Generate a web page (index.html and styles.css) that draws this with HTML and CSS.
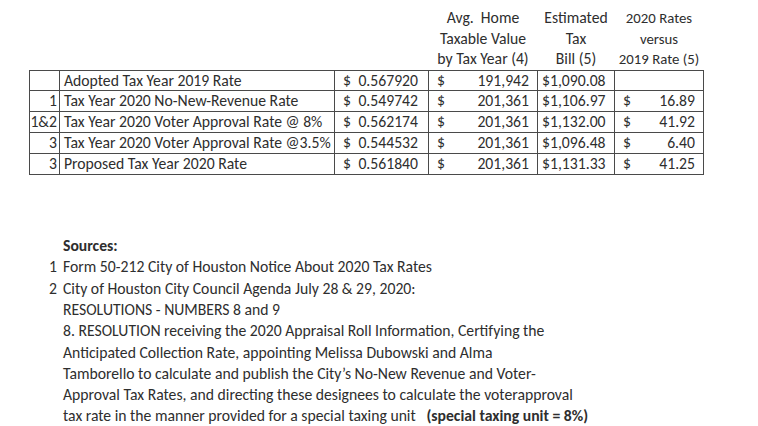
FILE: index.html
```html
<!DOCTYPE html>
<html>
<head>
<meta charset="utf-8">
<link rel="stylesheet" href="styles.css">
</head>
<body>
<div class="page">
  <table class="rates">
    <colgroup>
      <col class="c0"><col class="c1"><col class="c2"><col class="c3"><col class="c4"><col class="c5">
    </colgroup>
    <thead>
      <tr>
        <th></th><th></th><th></th>
        <th>Avg.&nbsp; Home<br>Taxable Value<br>by Tax Year (4)</th>
        <th>Estimated<br>Tax<br>Bill (5)</th>
        <th class="small">2020 Rates<br>versus<br>2019 Rate (5)</th>
      </tr>
    </thead>
    <tbody>
      <tr><td class="ref"></td><td class="lbl">Adopted Tax Year 2019 Rate</td><td class="money rate"><span class="cur">$</span><span class="amt">0.567920</span></td><td class="money"><span class="cur">$</span><span class="amt">191,942</span></td><td class="bill">$1,090.08</td><td class="money"></td></tr>
      <tr><td class="ref">1</td><td class="lbl">Tax Year 2020 No-New-Revenue Rate</td><td class="money rate"><span class="cur">$</span><span class="amt">0.549742</span></td><td class="money"><span class="cur">$</span><span class="amt">201,361</span></td><td class="bill">$1,106.97</td><td class="money"><span class="cur">$</span><span class="amt">16.89</span></td></tr>
      <tr><td class="ref">1&amp;2</td><td class="lbl">Tax Year 2020 Voter Approval Rate @ 8%</td><td class="money rate"><span class="cur">$</span><span class="amt">0.562174</span></td><td class="money"><span class="cur">$</span><span class="amt">201,361</span></td><td class="bill">$1,132.00</td><td class="money"><span class="cur">$</span><span class="amt">41.92</span></td></tr>
      <tr><td class="ref">3</td><td class="lbl">Tax Year 2020 Voter Approval Rate @3.5%</td><td class="money rate"><span class="cur">$</span><span class="amt">0.544532</span></td><td class="money"><span class="cur">$</span><span class="amt">201,361</span></td><td class="bill">$1,096.48</td><td class="money"><span class="cur">$</span><span class="amt">6.40</span></td></tr>
      <tr><td class="ref">3</td><td class="lbl">Proposed Tax Year 2020 Rate</td><td class="money rate"><span class="cur">$</span><span class="amt">0.561840</span></td><td class="money"><span class="cur">$</span><span class="amt">201,361</span></td><td class="bill">$1,131.33</td><td class="money"><span class="cur">$</span><span class="amt">41.25</span></td></tr>
    </tbody>
  </table>

  <div class="sources">
    <div class="title">Sources:</div>
    <div class="item"><span class="num">1</span><span class="txt">Form 50-212 City of Houston Notice About 2020 Tax Rates</span></div>
    <div class="item"><span class="num">2</span><span class="txt">City of Houston City Council Agenda July 28 &amp; 29, 2020:<br>RESOLUTIONS - NUMBERS 8 and 9<br>8. RESOLUTION receiving the 2020 Appraisal Roll Information, Certifying the<br>Anticipated Collection Rate, appointing Melissa Dubowski and Alma<br>Tamborello to calculate and publish the City’s No-New Revenue and Voter-<br>Approval Tax Rates, and directing these designees to calculate the voterapproval<br>tax rate in the manner provided for a special taxing unit &nbsp;&nbsp;<b>(special taxing unit = 8%)</b></span></div>
  </div>
</div>
</body>
</html>
```

FILE: styles.css
```css
html, body {
  margin: 0;
  background: #ffffff;
}
body {
  font-family: Carlito, Lato, "Liberation Sans", sans-serif;
  font-size: 15.7px;
  color: #2e2e2e;
}
.page {
  padding: 8px 0 0 29px;
}
.rates {
  border-collapse: collapse;
  table-layout: fixed;
  width: 675px;
}
.c0 { width: 30px; }
.c1 { width: 275px; }
.c2 { width: 94px; }
.c3 { width: 109px; }
.c4 { width: 77px; }
.c5 { width: 89px; }
.rates th {
  font-weight: normal;
  text-align: center;
  line-height: 20.5px;
  padding: 0;
  white-space: nowrap;
}
.rates th.small {
  font-size: 14.8px;
}
.rates td {
  border: 1.5px solid #4a4a4a;
  height: 19.9px;
  line-height: 19.9px;
  padding: 0;
  white-space: nowrap;
  overflow: hidden;
}
.rates td.ref {
  text-align: right;
  padding-right: 2px;
}
.rates td.lbl {
  padding-left: 4px;
}
.rates td.money {
  padding: 0 8px;
}
.rates td.money.rate {
  padding: 0 10px 0 8px;
}
.cur {
  float: left;
}
.amt {
  float: right;
}
.rates td.bill {
  padding-left: 4px;
}
.sources {
  margin-top: 60px;
  line-height: 21.3px;
}
.title {
  font-weight: bold;
  padding-left: 34px;
}
.item {
  display: flex;
}
.num {
  flex: none;
  width: 28px;
  text-align: right;
}
.txt {
  padding-left: 6px;
}
```
